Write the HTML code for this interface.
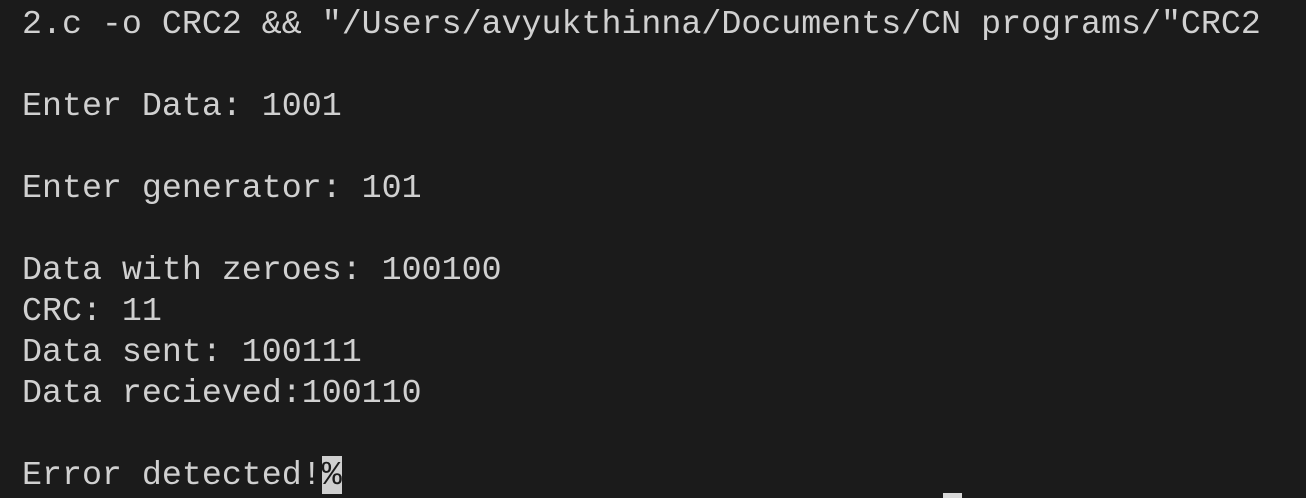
<!DOCTYPE html>
<html><head><style>
html,body{margin:0;padding:0;background:#1b1b1b;width:1306px;height:498px;overflow:hidden}
pre{margin:0;position:absolute;left:22px;top:4px;font-family:"Liberation Mono","DejaVu Sans Mono",monospace;font-size:33.3px;line-height:41px;color:#d0d0d0}
.cur{background:#cfcfcf;color:#1b1b1b}
.m{position:absolute;left:943px;top:493px;width:19px;height:5px;background:#d8d8d8}
</style></head><body>
<pre>2.c -o CRC2 &amp;&amp; "/Users/avyukthinna/Documents/CN programs/"CRC2

Enter Data: 1001

Enter generator: 101

Data with zeroes: 100100
CRC: 11
Data sent: 100111
Data recieved:100110

Error detected!<span class="cur">%</span></pre>
<div class="m"></div>
</body></html>
